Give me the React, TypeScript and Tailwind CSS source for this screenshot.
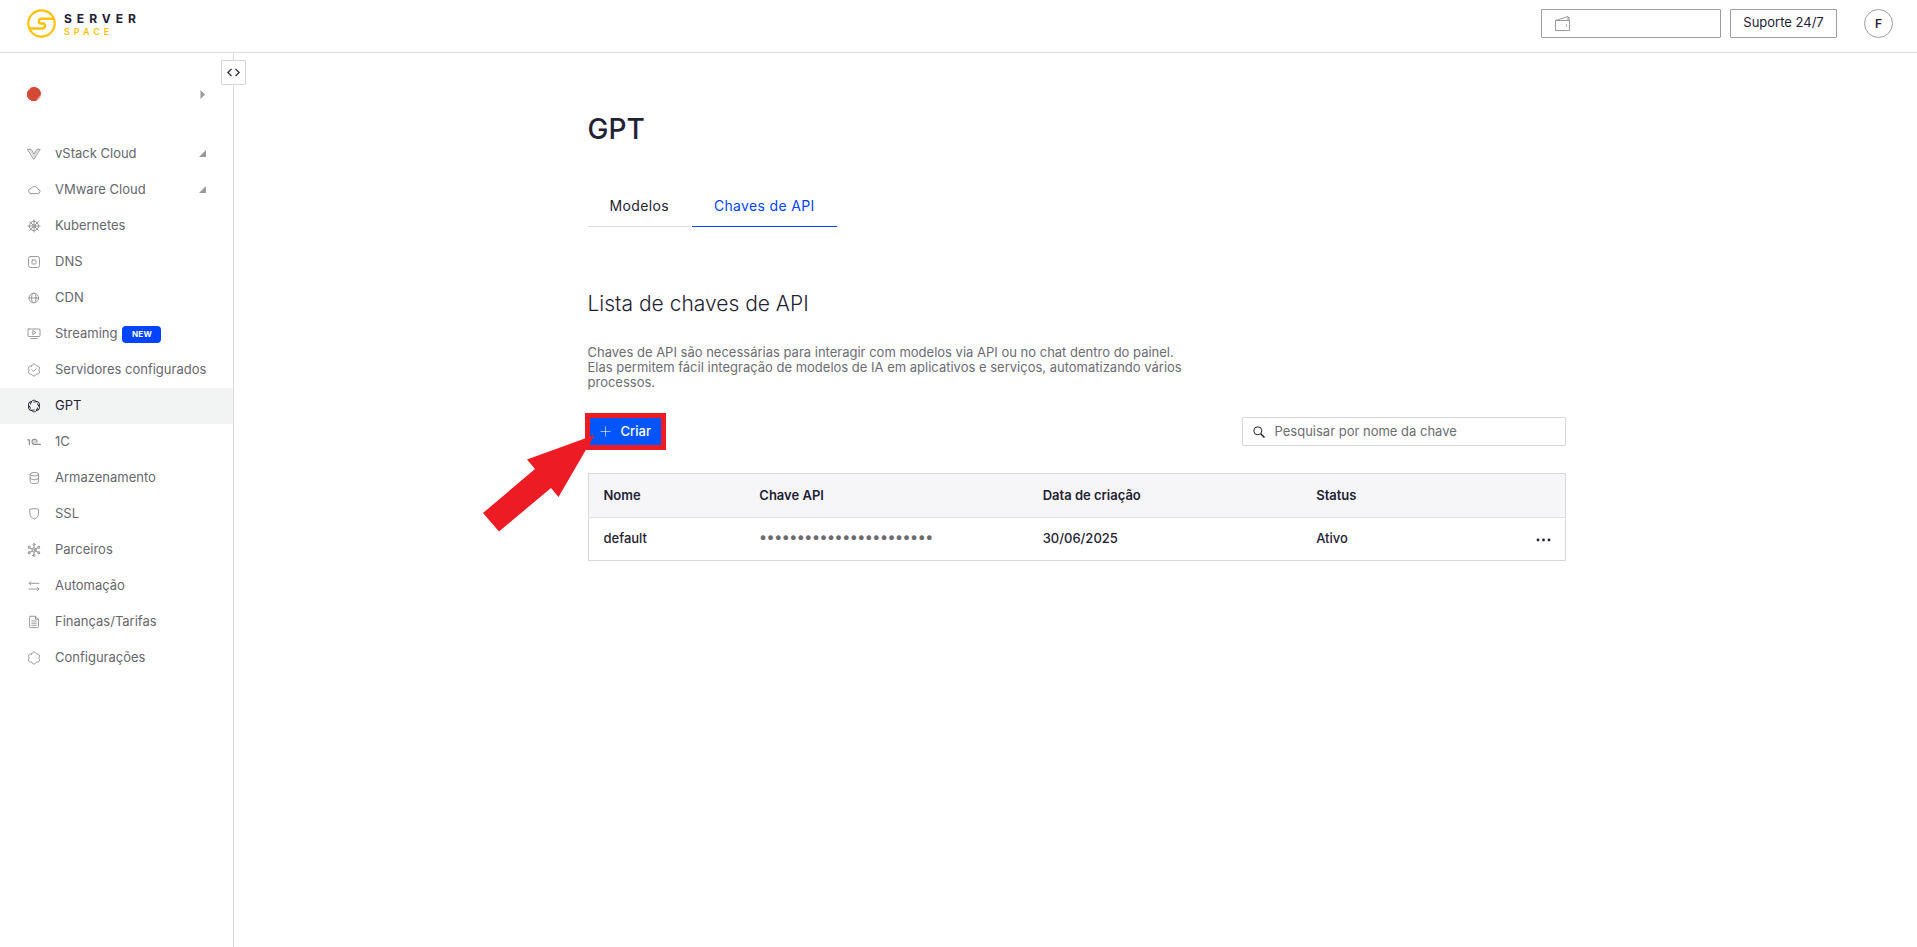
import { useState } from 'react';
import type { ReactNode } from 'react';

type NavItem = {
  label: string;
  icon: ReactNode;
  expandable?: boolean;
  badge?: string;
  active?: boolean;
};

function Icon({ children }: { children: ReactNode }) {
  return (
    <svg
      viewBox="0 0 14 14"
      className="size-3.5 shrink-0"
      fill="none"
      stroke="currentColor"
      strokeWidth="0.9"
      strokeLinejoin="round"
      strokeLinecap="round"
      aria-hidden="true"
    >
      {children}
    </svg>
  );
}

const spokes = [0, 45, 90, 135, 180, 225, 270, 315];
const sixth = [0, 60, 120, 180, 240, 300];
const gear =
  'M4.600 2.840Q7-1.200 9.400 2.840 14.100 2.900 11.800 7 14.100 11.100 9.400 11.160 7 15.200 4.600 11.160-.1 11.100 2.200 7-.1 2.900 4.600 2.840Z';

const items: NavItem[] = [
  {
    label: 'vStack Cloud',
    expandable: true,
    icon: (
      <Icon>
        <path d="M.8 2.300h3.300L7 7.300l2.900-5h3.300L7 12Z" />
        <path d="M2.500 2.300 7 9.800l4.500-7.500" strokeWidth="0.4" />
      </Icon>
    ),
  },
  {
    label: 'VMware Cloud',
    expandable: true,
    icon: (
      <Icon>
        <path d="M3.500 10.600h7.200a2.200 2.200 0 0 0 .2-4.400A3.700 3.700 0 0 0 4 5.500a2.600 2.600 0 0 0-.5 5.100Z" />
      </Icon>
    ),
  },
  {
    label: 'Kubernetes',
    icon: (
      <Icon>
        <circle cx="7" cy="7" r="4.600" />
        <circle cx="7" cy="7" r="1.200" />
        {spokes.map((a) => (
          <path key={a} d="M7 5.800V.9" transform={`rotate(${a} 7 7)`} />
        ))}
      </Icon>
    ),
  },
  {
    label: 'DNS',
    icon: (
      <Icon>
        <rect x="1.500" y="1.500" width="11" height="11" rx="2" />
        <rect x="5" y="5" width="4" height="4" rx="0.600" />
      </Icon>
    ),
  },
  {
    label: 'CDN',
    icon: (
      <Icon>
        <circle cx="6.800" cy="7" r="4.800" />
        <ellipse cx="6.800" cy="7" rx="2.200" ry="4.800" />
        <path d="M2 7h9.600" />
      </Icon>
    ),
  },
  {
    label: 'Streaming',
    badge: 'NEW',
    icon: (
      <Icon>
        <rect x="1" y="2" width="12" height="7.500" rx="0.800" />
        <path d="M5.800 4v3.600L8.600 5.800ZM3.800 11.500h6.400" />
      </Icon>
    ),
  },
  {
    label: 'Servidores configurados',
    icon: (
      <Icon>
        <path d={gear} />
        <path d="m5 6.900 1.500 1.500L9.200 5.700" />
      </Icon>
    ),
  },
  {
    label: 'GPT',
    active: true,
    icon: (
      <Icon>
        {sixth.map((a) => (
          <path
            key={a}
            d="M4.200 2.900C5.200.6 8.500.5 9.700 2.700M9.700 2.700 6.800 3"
            strokeWidth="0.900"
            transform={`rotate(${a} 7 7)`}
          />
        ))}
      </Icon>
    ),
  },
  {
    label: '1C',
    icon: (
      <Icon>
        <path d="M.6 4.800h1.800V9.600M10 6.600A2.500 2.500 0 1 0 7.600 9.400h5.900" strokeWidth="1.200" />
        <path d="M8.600 7A1 1 0 1 0 7.600 8h2.600" strokeWidth="0.500" />
      </Icon>
    ),
  },
  {
    label: 'Armazenamento',
    icon: (
      <Icon>
        <ellipse cx="7.300" cy="3.200" rx="4.200" ry="1.700" />
        <path d="M3.100 3.200v7.700c0 .9 1.900 1.700 4.200 1.700s4.200-.8 4.200-1.700V3.200M3.100 7c0 .9 1.900 1.700 4.200 1.700S11.500 7.900 11.500 7" />
      </Icon>
    ),
  },
  {
    label: 'SSL',
    icon: (
      <Icon>
        <path d="M3 2.200c2.700-.7 5.500-.7 8.400 0v5.200c0 2-1.500 3.600-4.200 4.600C4.500 11 3 9.400 3 7.400Z" />
      </Icon>
    ),
  },
  {
    label: 'Parceiros',
    icon: (
      <Icon>
        <circle cx="7" cy="7" r="2.100" />
        <circle cx="7" cy="7" r="0.500" />
        {sixth.map((a) => (
          <g key={a} transform={`rotate(${a} 7 7)`}>
            <path d="M7 4.900V2.600" />
            <circle cx="7" cy="1.500" r="1" />
          </g>
        ))}
      </Icon>
    ),
  },
  {
    label: 'Automação',
    icon: (
      <Icon>
        <path d="M12 4.300H2.200M3.900 2.600 2.200 4.300 3.900 6M2 10h9.900M10.200 8.300l1.700 1.700-1.700 1.700" />
      </Icon>
    ),
  },
  {
    label: 'Finanças/Tarifas',
    icon: (
      <Icon>
        <path d="M3.500 1.300h5l3 3v7.400c0 .6-.3.900-.9.900H3.500c-.6 0-.9-.3-.9-.9V2.200c0-.6.3-.9.900-.9ZM8.500 1.300v3h3M4.700 6h4.600M4.700 8.200h4.600M4.700 10.300h4.600" />
      </Icon>
    ),
  },
  {
    label: 'Configurações',
    icon: (
      <Icon>
        <path d={gear} />
      </Icon>
    ),
  },
];

function Logo() {
  return (
    <a href="#" aria-label="Serverspace" className="flex items-center gap-2">
      <svg viewBox="0 0 29 29" className="size-[29px]" fill="none" stroke="#ffc107" strokeWidth="2.200">
        <circle cx="14.500" cy="14.500" r="13.200" />
        <path d="M27 9.700H14.500c-3 0-3.800 4.800-.6 4.800h2c3.200 0 2.400 5-.6 5H3" strokeWidth="2.400" />
      </svg>
      <span className="flex flex-col pt-0.5 font-bold">
        <span className="text-xs leading-[13px] tracking-[5px] text-[#1f2233]">SERVER</span>
        <span className="text-[9px] leading-[13px] font-semibold tracking-[4px] text-[#ffc107]">SPACE</span>
      </span>
    </a>
  );
}

function Header() {
  return (
    <header className="flex h-[53px] shrink-0 items-start justify-between border-b border-[#dcdcdf] pt-[9px] pr-6 pl-[27px]">
      <Logo />
      <div className="flex items-center">
        <button
          type="button"
          aria-label="Saldo"
          className="flex h-[29px] w-[180px] items-center rounded-[1px] border border-[#9d9da1] px-3 text-[#8f8f94]"
        >
          <svg viewBox="0 0 17 17" className="size-[17px]" fill="none" stroke="currentColor" strokeWidth="0.900" aria-hidden="true">
            <path d="M1.500 5.500h14v10h-14ZM1.500 5.500 14 1.500v4M14 2.500h1.200v3M12.500 9.500v2" />
          </svg>
        </button>
        <button
          type="button"
          className="ml-[9px] h-[29px] w-[107px] rounded-[1px] border border-[#9d9da1] pb-0.5 text-[13px] text-[#1f2233]"
        >
          Suporte 24/7
        </button>
        <button
          type="button"
          aria-label="Conta"
          className="ml-[27px] size-[29px] rounded-full border border-[#9d9da1] text-xs font-semibold text-[#1f2233]"
        >
          F
        </button>
      </div>
    </header>
  );
}

function Sidebar() {
  return (
    <aside className="relative w-[234px] shrink-0 border-r border-[#dcdcdf]">
      <button
        type="button"
        aria-label="Recolher menu"
        className="absolute top-[7px] -right-[13px] flex size-[25px] items-center justify-center rounded-[1px] border border-[#d6d6d9] bg-white text-[#1f2233]"
      >
        <svg viewBox="0 0 13 9" className="h-[9px] w-[13px]" fill="none" stroke="currentColor" strokeWidth="1.200" aria-hidden="true">
          <path d="M4.500.8.900 4.500l3.600 3.700M8.500.8l3.600 3.700-3.600 3.700" />
        </svg>
      </button>
      <button
        type="button"
        aria-label="Projeto"
        className="mt-[23px] flex h-9 w-full items-center justify-between pr-7 pl-[27px]"
      >
        <svg viewBox="0 0 14 14" className="size-3.5" aria-hidden="true">
          <circle cx="7" cy="7" r="7" fill="#f2a08f" />
          <path d="M4.200.6A7 7 0 0 1 13.900 7.500L8.200 13.900A7 7 0 0 1 .1 6Z" fill="#d24a35" />
          <path d="M1.200 3.200 10.500 13A7 7 0 0 1 .1 6Z" fill="#d24a35" />
        </svg>
        <svg viewBox="0 0 5 9" className="h-[9px] w-[5px]" fill="#98989d" aria-hidden="true">
          <path d="M.5 0 5 4.500.5 9Z" />
        </svg>
      </button>
      <nav className="mt-6">
        {items.map((item) => (
          <a
            key={item.label}
            href="#"
            aria-current={item.active ? 'page' : undefined}
            className={
              'flex h-9 items-center pr-[27px] pl-[27px] text-[13px] whitespace-nowrap ' +
              (item.active ? 'bg-[#f2f4f4] text-[#1f2233]' : 'text-[#66676d]')
            }
          >
            <span className={item.active ? 'text-[#1f2233]' : 'text-[#8f8f94]'}>{item.icon}</span>
            <span className="ml-3.5">{item.label}</span>
            {item.badge && (
              <span className="ml-[5px] flex h-[17px] w-[39px] items-center justify-center rounded bg-[#0044ff] text-[8px] font-bold tracking-wide text-white">
                {item.badge}
              </span>
            )}
            {item.expandable && (
              <svg viewBox="0 0 7 7" className="mb-0.5 ml-auto size-[7px]" fill="#98989d" aria-hidden="true">
                <path d="M7 0v7H0Z" />
              </svg>
            )}
          </a>
        ))}
      </nav>
    </aside>
  );
}

function Pointer() {
  return (
    <div className="pointer-events-none absolute -top-1 -left-[3px] h-[37px] w-[81px] border-5 border-[#ed1c24]" aria-hidden="true">
      <svg viewBox="0 0 112 98" className="absolute top-[17px] -left-[107px] h-[98px] w-[112px]" fill="#ed1c24">
        <path d="M0 78 52 34 44 24.500 111.500 0 75.500 62 68 53 16 96.500Z" />
      </svg>
    </div>
  );
}

export default function App() {
  const [query, setQuery] = useState('');

  return (
    <div className="flex min-h-screen flex-col bg-white font-['Inter',sans-serif] text-[#1f2233]">
      <Header />
      <div className="flex grow">
        <Sidebar />
        <main className="grow pt-14 pr-8 pl-[34px]">
          <div className="mx-auto max-w-[978px]">
            <h1 className="text-[28px] leading-10 font-medium">GPT</h1>

            <div role="tablist" className="mt-[47px] flex gap-px text-sm tracking-wide">
              <button type="button" role="tab" aria-selected="false" className="border-b border-[#dcdcdf] px-[22px] pb-2.5">
                Modelos
              </button>
              <button type="button" role="tab" aria-selected="true" className="border-b border-[#0044ff] px-[22px] pb-2.5 text-[#0044ff]">
                Chaves de API
              </button>
            </div>

            <h2 className="mt-[62px] text-[21px] leading-[30px] font-light">Lista de chaves de API</h2>
            <p className="mt-[26px] max-w-[608px] text-[13px] leading-[15px] text-[#6b6c72]">
              Chaves de API são necessárias para interagir com modelos via API ou no chat dentro do painel. Elas permitem
              fácil integração de modelos de IA em aplicativos e serviços, automatizando vários processos.
            </p>

            <div className="mt-[27px] flex items-center justify-between">
              <div className="relative">
                <button type="button" className="flex h-[29px] items-center gap-2.5 bg-[#0055ff] px-3 text-[13px] font-medium text-white">
                  <svg viewBox="0 0 11 11" className="size-[11px]" stroke="#ffffff" strokeOpacity="0.600" aria-hidden="true">
                    <path d="M5.500.5v10M.5 5.500h10" />
                  </svg>
                  Criar
                </button>
                <Pointer />
              </div>
              <label className="flex h-[29px] w-[324px] items-center gap-2.5 rounded-[1px] border border-[#d6d6d9] px-2.5">
                <svg viewBox="0 0 12 12" className="size-3 shrink-0" fill="none" stroke="#1f2233" strokeWidth="1" aria-hidden="true">
                  <circle cx="4.800" cy="4.800" r="4" />
                  <path d="m7.700 7.700 3.800 3.800" strokeWidth="1.500" />
                </svg>
                <input
                  type="text"
                  value={query}
                  onChange={(e) => setQuery(e.target.value)}
                  aria-label="Pesquisar por nome da chave"
                  placeholder="Pesquisar por nome da chave"
                  className="w-full text-[13px] outline-none placeholder:text-[#6b6c72]"
                />
              </label>
            </div>

            <table className="mt-[27px] w-full table-fixed border border-[#d9d9dd] text-left text-[13px]">
              <thead className="border-b border-[#dfe3ec] bg-[#f6f6f9]">
                <tr className="h-11">
                  <th className="w-[16%] px-[15px] font-semibold">Nome</th>
                  <th className="w-[29%] px-[15px] font-semibold">Chave API</th>
                  <th className="w-[28%] px-[15px] font-semibold">Data de criação</th>
                  <th className="px-[15px] font-semibold">Status</th>
                  <th className="w-14" aria-label="Ações" />
                </tr>
              </thead>
              <tbody>
                <tr className="h-[43px] font-medium">
                  <td className="px-[15px]">default</td>
                  <td className="px-[15px] pb-1 text-[15px] leading-4 font-semibold whitespace-nowrap text-[#6b6c72]">
                    •••••••••••••••••••••••
                  </td>
                  <td className="px-[15px]">30/06/2025</td>
                  <td className="px-[15px]">Ativo</td>
                  <td className="px-3.5 text-right">
                    <button type="button" aria-label="Mais opções" className="inline-flex align-middle">
                      <svg viewBox="0 0 15 4" className="h-1 w-[15px]" fill="#1f2233" aria-hidden="true">
                        <circle cx="2" cy="2" r="1.400" />
                        <circle cx="7.500" cy="2" r="1.400" />
                        <circle cx="13" cy="2" r="1.400" />
                      </svg>
                    </button>
                  </td>
                </tr>
              </tbody>
            </table>
          </div>
        </main>
      </div>
    </div>
  );
}
